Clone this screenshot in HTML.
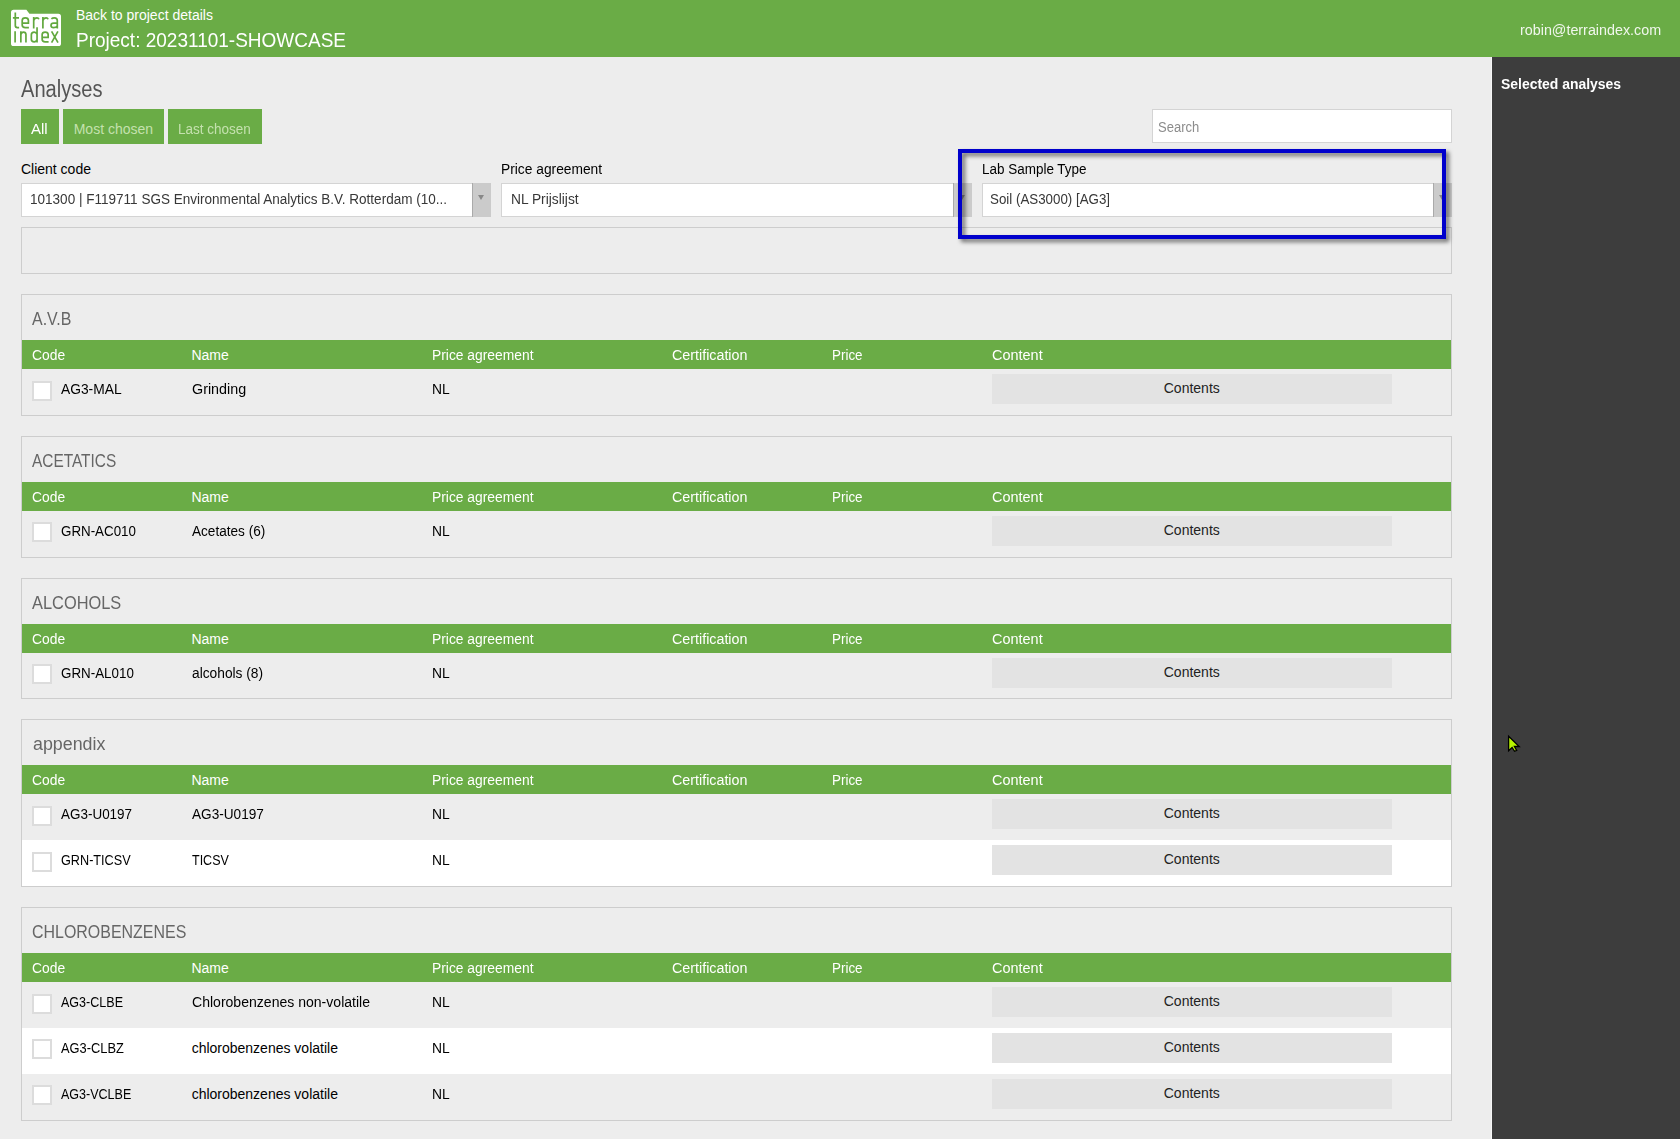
<!DOCTYPE html>
<html><head><meta charset="utf-8">
<style>
*{box-sizing:border-box;margin:0;padding:0}
html,body{width:1680px;height:1139px;overflow:hidden}
body{background:#ededed;font-family:"Liberation Sans",sans-serif;font-size:14px;color:#000;position:relative}
.t{position:absolute;white-space:nowrap;line-height:1;transform-origin:0 0}
#hdr{position:absolute;left:0;top:0;width:1680px;height:57px;background:#6aac46}
#side{position:absolute;left:1492px;top:57px;width:188px;height:1082px;background:#3d3d3d}
#sideline{position:absolute;left:1491px;top:57px;width:1px;height:1082px;background:#f7f7f7}
.btn{position:absolute;top:109px;height:35px;background:#6aac46}
.box{position:absolute;background:#fff;border:1px solid #d4d4d4}
.sel{position:absolute;top:183px;height:34px;background:#fff;border:1px solid #d4d4d4}
.arr{position:absolute;top:183px;height:34px;width:19px;background:#cbcbcb;border-left:1px solid #aaa}
.arr:after{content:"";position:absolute;left:5px;top:12px;border-left:3px solid transparent;border-right:3px solid transparent;border-top:5px solid #888}
.sec{position:absolute;left:21px;width:1431px;border:1px solid #cdcdcd}
.gh{position:absolute;left:22px;width:1429px;height:29px;background:#6aac46}
.roww{position:absolute;left:22px;width:1429px;background:#fff}
.cb{position:absolute;left:32px;width:20px;height:20px;background:#fff;border:2px solid #dcdcdc}
.cbtn{position:absolute;left:992px;width:400px;height:30px;background:#e3e3e3}
#hl{position:absolute;left:958px;top:149px;width:488px;height:90px;border:4px solid #0000cc;filter:drop-shadow(3px 3px 2px rgba(0,0,0,.55))}
</style></head><body>
<div id="hdr"><svg style="position:absolute;left:0;top:0" width="70" height="57" viewBox="0 0 70 57">
<path d="M13.6 9.7 H26.4 L29.4 13.7 H58.4 Q61 13.7 61 16.3 V43.4 Q61 46 58.4 46 H13.6 Q11 46 11 43.4 V12.3 Q11 9.7 13.6 9.7 Z" fill="#fff"/>
<g fill="none" stroke="#62a83e" stroke-width="1.7">
<path d="M15.3 12.6 V25.6 Q15.3 27.6 17.3 27.6 H19.1 M12.9 17.9 H19"/>
<path d="M22.2 23.2 H28.4 V20.4 Q28.4 17.9 25.3 17.9 Q22.2 17.9 22.2 20.4 V25.1 Q22.2 27.6 25.3 27.6 H28.9"/>
<path d="M33.7 28.4 V17.1 M33.7 20.6 Q34.4 17.9 37 17.9 Q38.4 17.9 38.9 19.3"/>
<path d="M42.9 28.4 V17.1 M42.9 20.6 Q43.6 17.9 46.2 17.9 Q47.6 17.9 48.1 19.3"/>
<path d="M51.4 18.8 Q52.4 17.9 54.4 17.9 Q57.3 17.9 57.3 20.6 V28.4 M57.3 23.2 H53.6 Q51 23.2 51 25.4 Q51 27.6 53.6 27.6 Q56.3 27.6 57.3 26"/>
<path d="M15.1 31.3 V42.6"/>
<path d="M20.85 31.3 V42.6 M20.85 34.6 Q21.5 32.1 23.5 32.1 Q25.95 32.1 25.95 34.6 V42.6"/>
<path d="M37.05 27.3 V42.6 M37.05 39.6 Q36.4 41.8 34.2 41.8 Q31.35 41.8 31.35 39.2 V34.8 Q31.35 32.1 34.2 32.1 Q36.4 32.1 37.05 34.2"/>
<path d="M42.15 37.4 H48.15 V34.6 Q48.15 32.1 45.15 32.1 Q42.15 32.1 42.15 34.6 V39.3 Q42.15 41.8 45.15 41.8 H48.6"/>
<path d="M51.6 31.3 L58 42.6 M57.9 31.3 L51.6 42.6"/>
</g></svg></div>
<div id="sideline"></div>
<div id="side"></div>
<div class="btn" style="left:21px;width:38px"></div>
<div class="btn" style="left:63px;width:101px"></div>
<div class="btn" style="left:168px;width:94px"></div>
<div class="box" style="left:1152px;top:109px;width:300px;height:34px"></div>
<div class="sel" style="left:21px;width:470px"></div><div class="arr" style="left:472px"></div>
<div class="sel" style="left:501px;width:471px"></div><div class="arr" style="left:953px"></div>
<div class="sel" style="left:982px;width:470px"></div><div class="arr" style="left:1433px"></div>
<div class="box" style="left:21px;top:227px;width:1431px;height:47px;background:#ededed;border-color:#cdcdcd"></div>
<div class="sec" style="top:294px;height:122px"></div>
<div class="gh" style="top:340px"></div>
<div class="cb" style="top:381px"></div>
<div class="cbtn" style="top:374px"></div>
<div class="sec" style="top:436px;height:122px"></div>
<div class="gh" style="top:482px"></div>
<div class="cb" style="top:522px"></div>
<div class="cbtn" style="top:516px"></div>
<div class="sec" style="top:578px;height:121px"></div>
<div class="gh" style="top:624px"></div>
<div class="cb" style="top:664px"></div>
<div class="cbtn" style="top:658px"></div>
<div class="sec" style="top:719px;height:168px"></div>
<div class="gh" style="top:765px"></div>
<div class="cb" style="top:806px"></div>
<div class="cbtn" style="top:799px"></div>
<div class="roww" style="top:840px;height:46px"></div>
<div class="cb" style="top:852px"></div>
<div class="cbtn" style="top:845px"></div>
<div class="sec" style="top:907px;height:214px"></div>
<div class="gh" style="top:953px"></div>
<div class="cb" style="top:994px"></div>
<div class="cbtn" style="top:987px"></div>
<div class="roww" style="top:1028px;height:46px"></div>
<div class="cb" style="top:1039px"></div>
<div class="cbtn" style="top:1033px"></div>
<div class="cb" style="top:1085px"></div>
<div class="cbtn" style="top:1079px"></div>
<div class="t" style="left:75.94px;top:8.15px;font-size:14px;color:#fff">Back to project details</div>
<div class="t" style="left:75.74px;top:31.46px;font-size:19.3px;color:#fff;transform:scaleX(0.9855)">Project: 20231101-SHOWCASE</div>
<div class="t" style="left:1520.43px;top:23.15px;font-size:14px;color:rgba(255,255,255,.9);transform:scaleX(1.0233)">robin@terraindex.com</div>
<div class="t" style="left:1501.44px;top:77.15px;font-size:14px;color:#fff;font-weight:700;transform:scaleX(0.9956)">Selected analyses</div>
<div class="t" style="left:20.60px;top:78.33px;font-size:23px;color:#555;transform:scaleX(0.8744)">Analyses</div>
<div class="t" style="left:31.40px;top:122.15px;font-size:14px;color:#fff;transform:scaleX(1.0732)">All</div>
<div class="t" style="left:73.69px;top:122.15px;font-size:14px;color:#c4e1ae">Most chosen</div>
<div class="t" style="left:178.21px;top:122.15px;font-size:14px;color:#c4e1ae;transform:scaleX(0.9646)">Last chosen</div>
<div class="t" style="left:1157.98px;top:120.15px;font-size:14px;color:#8c8c8c;transform:scaleX(0.9297)">Search</div>
<div class="t" style="left:20.94px;top:162.15px;font-size:14px;color:#000">Client code</div>
<div class="t" style="left:501.15px;top:162.15px;font-size:14px;color:#000;transform:scaleX(0.9843)">Price agreement</div>
<div class="t" style="left:982.36px;top:162.15px;font-size:14px;color:#000;transform:scaleX(0.9619)">Lab Sample Type</div>
<div class="t" style="left:29.96px;top:192.15px;font-size:14px;color:#383838;transform:scaleX(0.9668)">101300 | F119711 SGS Environmental Analytics B.V. Rotterdam (10...</div>
<div class="t" style="left:510.65px;top:192.15px;font-size:14px;color:#383838;transform:scaleX(0.9837)">NL Prijslijst</div>
<div class="t" style="left:990.47px;top:192.15px;font-size:14px;color:#383838;transform:scaleX(0.9524)">Soil (AS3000) [AG3]</div>
<div class="t" style="left:31.56px;top:309.51px;font-size:18.3px;color:#666;transform:scaleX(0.8716)">A.V.B</div>
<div class="t" style="left:32.25px;top:348.15px;font-size:14px;color:#fff;transform:scaleX(0.9892)">Code</div>
<div class="t" style="left:191.44px;top:348.15px;font-size:14px;color:#fff">Name</div>
<div class="t" style="left:431.85px;top:348.15px;font-size:14px;color:#fff;transform:scaleX(0.9882)">Price agreement</div>
<div class="t" style="left:671.83px;top:348.15px;font-size:14px;color:#fff;transform:scaleX(1.0206)">Certification</div>
<div class="t" style="left:831.86px;top:348.15px;font-size:14px;color:#fff;transform:scaleX(0.9582)">Price</div>
<div class="t" style="left:991.82px;top:348.15px;font-size:14px;color:#fff;transform:scaleX(1.0328)">Content</div>
<div class="t" style="left:60.65px;top:382.15px;font-size:14px;color:#000;transform:scaleX(0.9859)">AG3-MAL</div>
<div class="t" style="left:191.63px;top:382.15px;font-size:14px;color:#000;transform:scaleX(1.0231)">Grinding</div>
<div class="t" style="left:431.85px;top:382.15px;font-size:14px;color:#000;transform:scaleX(0.9889)">NL</div>
<div class="t" style="left:1163.74px;top:381.15px;font-size:14px;color:#222">Contents</div>
<div class="t" style="left:31.58px;top:451.51px;font-size:18.3px;color:#666;transform:scaleX(0.8433)">ACETATICS</div>
<div class="t" style="left:32.25px;top:490.15px;font-size:14px;color:#fff;transform:scaleX(0.9892)">Code</div>
<div class="t" style="left:191.44px;top:490.15px;font-size:14px;color:#fff">Name</div>
<div class="t" style="left:431.85px;top:490.15px;font-size:14px;color:#fff;transform:scaleX(0.9882)">Price agreement</div>
<div class="t" style="left:671.83px;top:490.15px;font-size:14px;color:#fff;transform:scaleX(1.0206)">Certification</div>
<div class="t" style="left:831.86px;top:490.15px;font-size:14px;color:#fff;transform:scaleX(0.9582)">Price</div>
<div class="t" style="left:991.82px;top:490.15px;font-size:14px;color:#fff;transform:scaleX(1.0328)">Content</div>
<div class="t" style="left:60.67px;top:524.15px;font-size:14px;color:#000;transform:scaleX(0.9539)">GRN-AC010</div>
<div class="t" style="left:191.66px;top:524.15px;font-size:14px;color:#000;transform:scaleX(0.9709)">Acetates (6)</div>
<div class="t" style="left:431.85px;top:524.15px;font-size:14px;color:#000;transform:scaleX(0.9889)">NL</div>
<div class="t" style="left:1163.74px;top:523.15px;font-size:14px;color:#222">Contents</div>
<div class="t" style="left:31.54px;top:593.51px;font-size:18.3px;color:#666;transform:scaleX(0.8969)">ALCOHOLS</div>
<div class="t" style="left:32.25px;top:632.15px;font-size:14px;color:#fff;transform:scaleX(0.9892)">Code</div>
<div class="t" style="left:191.44px;top:632.15px;font-size:14px;color:#fff">Name</div>
<div class="t" style="left:431.85px;top:632.15px;font-size:14px;color:#fff;transform:scaleX(0.9882)">Price agreement</div>
<div class="t" style="left:671.83px;top:632.15px;font-size:14px;color:#fff;transform:scaleX(1.0206)">Certification</div>
<div class="t" style="left:831.86px;top:632.15px;font-size:14px;color:#fff;transform:scaleX(0.9582)">Price</div>
<div class="t" style="left:991.82px;top:632.15px;font-size:14px;color:#fff;transform:scaleX(1.0328)">Content</div>
<div class="t" style="left:60.66px;top:666.15px;font-size:14px;color:#000;transform:scaleX(0.9555)">GRN-AL010</div>
<div class="t" style="left:191.65px;top:666.15px;font-size:14px;color:#000;transform:scaleX(0.9824)">alcohols (8)</div>
<div class="t" style="left:431.85px;top:666.15px;font-size:14px;color:#000;transform:scaleX(0.9889)">NL</div>
<div class="t" style="left:1163.74px;top:665.15px;font-size:14px;color:#222">Contents</div>
<div class="t" style="left:32.69px;top:734.51px;font-size:18.3px;color:#666;transform:scaleX(0.9759)">appendix</div>
<div class="t" style="left:32.25px;top:773.15px;font-size:14px;color:#fff;transform:scaleX(0.9892)">Code</div>
<div class="t" style="left:191.44px;top:773.15px;font-size:14px;color:#fff">Name</div>
<div class="t" style="left:431.85px;top:773.15px;font-size:14px;color:#fff;transform:scaleX(0.9882)">Price agreement</div>
<div class="t" style="left:671.83px;top:773.15px;font-size:14px;color:#fff;transform:scaleX(1.0206)">Certification</div>
<div class="t" style="left:831.86px;top:773.15px;font-size:14px;color:#fff;transform:scaleX(0.9582)">Price</div>
<div class="t" style="left:991.82px;top:773.15px;font-size:14px;color:#fff;transform:scaleX(1.0328)">Content</div>
<div class="t" style="left:60.66px;top:807.15px;font-size:14px;color:#000;transform:scaleX(0.9613)">AG3-U0197</div>
<div class="t" style="left:191.66px;top:807.15px;font-size:14px;color:#000;transform:scaleX(0.9723)">AG3-U0197</div>
<div class="t" style="left:431.85px;top:807.15px;font-size:14px;color:#000;transform:scaleX(0.9889)">NL</div>
<div class="t" style="left:1163.74px;top:806.15px;font-size:14px;color:#222">Contents</div>
<div class="t" style="left:60.69px;top:853.15px;font-size:14px;color:#000;transform:scaleX(0.9041)">GRN-TICSV</div>
<div class="t" style="left:191.70px;top:853.15px;font-size:14px;color:#000;transform:scaleX(0.8924)">TICSV</div>
<div class="t" style="left:431.85px;top:853.15px;font-size:14px;color:#000;transform:scaleX(0.9889)">NL</div>
<div class="t" style="left:1163.74px;top:852.15px;font-size:14px;color:#222">Contents</div>
<div class="t" style="left:31.56px;top:922.51px;font-size:18.3px;color:#666;transform:scaleX(0.8728)">CHLOROBENZENES</div>
<div class="t" style="left:32.25px;top:961.15px;font-size:14px;color:#fff;transform:scaleX(0.9892)">Code</div>
<div class="t" style="left:191.44px;top:961.15px;font-size:14px;color:#fff">Name</div>
<div class="t" style="left:431.85px;top:961.15px;font-size:14px;color:#fff;transform:scaleX(0.9882)">Price agreement</div>
<div class="t" style="left:671.83px;top:961.15px;font-size:14px;color:#fff;transform:scaleX(1.0206)">Certification</div>
<div class="t" style="left:831.86px;top:961.15px;font-size:14px;color:#fff;transform:scaleX(0.9582)">Price</div>
<div class="t" style="left:991.82px;top:961.15px;font-size:14px;color:#fff;transform:scaleX(1.0328)">Content</div>
<div class="t" style="left:60.70px;top:995.15px;font-size:14px;color:#000;transform:scaleX(0.8953)">AG3-CLBE</div>
<div class="t" style="left:191.64px;top:995.15px;font-size:14px;color:#000;transform:scaleX(1.0032)">Chlorobenzenes non-volatile</div>
<div class="t" style="left:431.85px;top:995.15px;font-size:14px;color:#000;transform:scaleX(0.9889)">NL</div>
<div class="t" style="left:1163.74px;top:994.15px;font-size:14px;color:#222">Contents</div>
<div class="t" style="left:60.69px;top:1041.15px;font-size:14px;color:#000;transform:scaleX(0.9176)">AG3-CLBZ</div>
<div class="t" style="left:191.64px;top:1041.15px;font-size:14px;color:#000">chlorobenzenes volatile</div>
<div class="t" style="left:431.85px;top:1041.15px;font-size:14px;color:#000;transform:scaleX(0.9889)">NL</div>
<div class="t" style="left:1163.74px;top:1040.15px;font-size:14px;color:#222">Contents</div>
<div class="t" style="left:60.70px;top:1087.15px;font-size:14px;color:#000;transform:scaleX(0.8945)">AG3-VCLBE</div>
<div class="t" style="left:191.64px;top:1087.15px;font-size:14px;color:#000">chlorobenzenes volatile</div>
<div class="t" style="left:431.85px;top:1087.15px;font-size:14px;color:#000;transform:scaleX(0.9889)">NL</div>
<div class="t" style="left:1163.74px;top:1086.15px;font-size:14px;color:#222">Contents</div>
<div id="hl"></div>
<svg style="position:absolute;left:1500px;top:728px" width="30" height="30" viewBox="0 0 30 30"><path d="M8.6 8.2 L19.2 18.5 H14.4 L16.7 22.4 L14.5 23.3 L12.1 19.5 L8.6 22.7 Z" fill="#b8f500" stroke="#000" stroke-width="1.3" stroke-linejoin="miter"/></svg>
</body></html>
